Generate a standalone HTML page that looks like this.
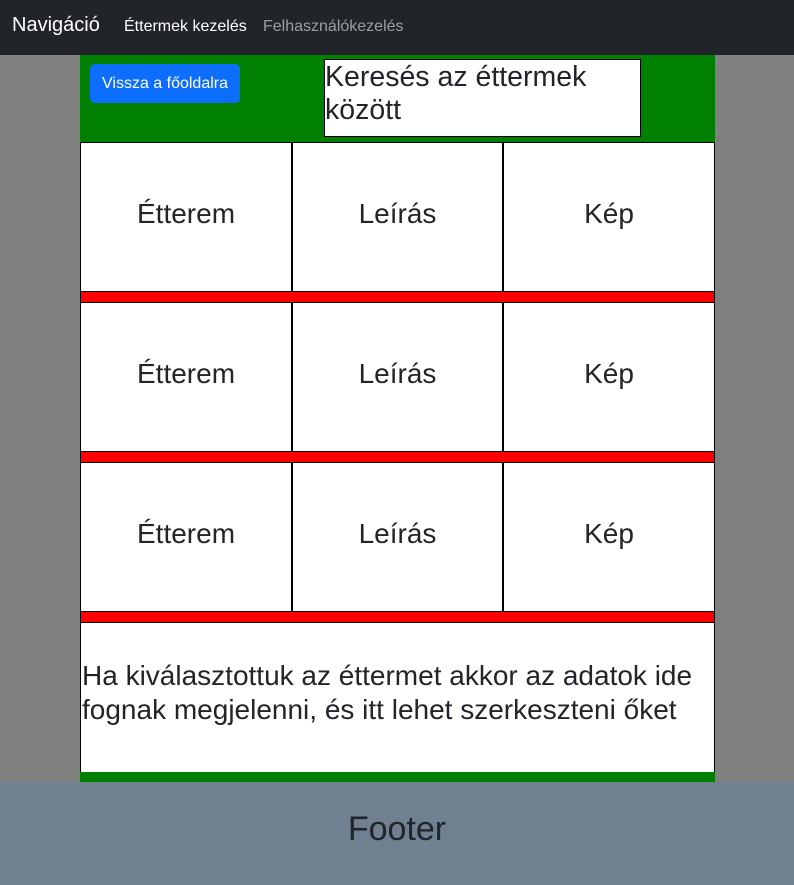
<!DOCTYPE html>
<html><head><style>
body{margin:0;width:794px;height:885px;background:#808080;font-family:"Liberation Sans",sans-serif;position:relative;overflow:hidden;color:#212529}
.a{position:absolute;box-sizing:border-box}
.nav{left:0;top:0;width:794px;height:55px;background:#212529}
.cell{background:#fff;border:1px solid #000;display:flex;align-items:center;justify-content:center;font-size:28px;padding-bottom:7px}
.red{background:#f00;border:1px solid #000;left:80px;width:635px}
</style></head><body>
<div class="a nav"></div>
<div class="a" style="left:12px;top:14px;font-size:20px;color:#fff">Navigáció</div>
<div class="a" style="left:124px;top:18px;font-size:16px;color:#fff">Éttermek kezelés</div>
<div class="a" style="left:263px;top:18px;font-size:16px;color:rgba(255,255,255,.55)">Felhasználókezelés</div>
<div class="a" style="left:80px;top:55px;width:635px;height:87px;background:#008000"></div>
<div class="a" style="left:90px;top:64px;width:150px;height:39px;background:#0d6efd;border-radius:5px;color:#fff;font-size:16px;text-align:center;line-height:39px">Vissza a főoldalra</div>
<div class="a" style="left:324px;top:59px;width:317px;height:78px;background:#fff;border:1px solid #000;font-size:28.5px;line-height:33px;padding:1px 0 0 0">Keresés az éttermek között</div>
<div class="a cell" style="left:80px;top:142px;width:212px;height:150px">Étterem</div>
<div class="a cell" style="left:292px;top:142px;width:211px;height:150px">Leírás</div>
<div class="a cell" style="left:503px;top:142px;width:212px;height:150px">Kép</div>
<div class="a red" style="top:291px;height:12px"></div>
<div class="a cell" style="left:80px;top:302px;width:212px;height:150px">Étterem</div>
<div class="a cell" style="left:292px;top:302px;width:211px;height:150px">Leírás</div>
<div class="a cell" style="left:503px;top:302px;width:212px;height:150px">Kép</div>
<div class="a red" style="top:451px;height:12px"></div>
<div class="a cell" style="left:80px;top:462px;width:212px;height:150px">Étterem</div>
<div class="a cell" style="left:292px;top:462px;width:211px;height:150px">Leírás</div>
<div class="a cell" style="left:503px;top:462px;width:212px;height:150px">Kép</div>
<div class="a red" style="top:611px;height:12px"></div>
<div class="a" style="left:80px;top:622px;width:635px;height:151px;background:#fff;border:1px solid #000;font-size:28px;line-height:34px;padding:36px 0 0 1px">Ha kiválasztottuk az éttermet akkor az adatok ide fognak megjelenni, és itt lehet szerkeszteni őket</div>
<div class="a" style="left:80px;top:772px;width:635px;height:10px;background:#008000"></div>
<div class="a" style="left:0;top:782px;width:794px;height:103px;background:#708090;font-size:34px;text-align:center;line-height:94px">Footer</div>
</body></html>
